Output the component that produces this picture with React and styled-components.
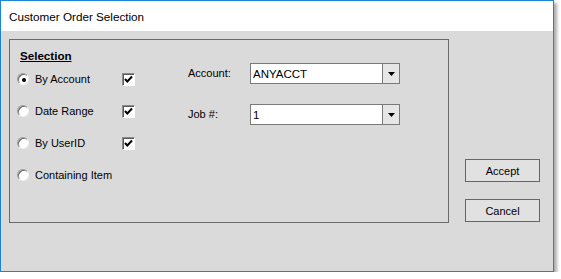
import React from "react";
import styled, { createGlobalStyle } from "styled-components";

const Global = createGlobalStyle`
  html, body { margin: 0; padding: 0; background: #ffffff; }
  body { font-family: "Liberation Sans", Arial, sans-serif; }
`;

const Window = styled.div`
  box-sizing: border-box;
  width: 554px;
  height: 272px;
  border: 1px solid #1a84d8;
  box-shadow: 3px 3px 3px rgba(0, 0, 0, 0.32);
  display: flex;
  flex-direction: column;
  background: #dadada;
`;

const TitleBar = styled.div`
  height: 30px;
  flex: none;
  background: #ffffff;
  display: flex;
  align-items: center;
  padding-left: 8px;
  padding-top: 1px;
  box-sizing: border-box;
  font-size: 11.7px;
  color: #000;
`;

const Body = styled.div`
  flex: 1;
  display: flex;
  gap: 16px;
  padding: 8px 0 0 8px;
  background: #dadada;
  font-size: 11px;
  color: #000;
`;

const GroupBox = styled.div`
  box-sizing: border-box;
  width: 440px;
  height: 184px;
  border: 1px solid #6a6a6a;
  display: flex;
  padding: 9px 0 0 7px;
`;

const LeftCol = styled.div`
  width: 171px;
  display: flex;
  flex-direction: column;
`;

const Heading = styled.div`
  height: 13px;
  line-height: 13px;
  padding-left: 3px;
  margin-bottom: 1px;
  font-size: 11.6px;
  font-weight: bold;
  text-decoration: underline;
`;

const OptionRow = styled.div`
  height: 32px;
  display: flex;
  align-items: center;
`;

const Radio = styled.span`
  box-sizing: border-box;
  width: 12px;
  height: 12px;
  border-radius: 50%;
  background: #fff;
  border: 1px solid;
  border-color: #9a9a9a #f4f4f4 #f4f4f4 #9a9a9a;
  box-shadow: inset 1px 1px 0 #6d6d6d;
  display: flex;
  align-items: center;
  justify-content: center;
  &::after {
    content: "";
    width: 4px;
    height: 4px;
    border-radius: 50%;
    background: ${(p) => (p.$checked ? "#000" : "transparent")};
    margin: 1px 0 0 1px;
  }
`;

const OptionLabel = styled.span`
  width: 87px;
  margin-left: 6px;
  white-space: nowrap;
  line-height: 13px;
`;

const CheckBox = styled.span`
  box-sizing: border-box;
  width: 13px;
  height: 13px;
  background: #fff;
  border: 1px solid;
  border-color: #8a8a8a #ffffff #ffffff #8a8a8a;
  box-shadow: inset 1px 1px 0 #5a5a5a;
  display: flex;
  align-items: center;
  justify-content: center;
`;

const RightCol = styled.div`
  display: flex;
  flex-direction: column;
  gap: 20px;
  padding-top: 14px;
`;

const FieldRow = styled.div`
  display: flex;
  align-items: center;
  height: 21px;
`;

const FieldLabel = styled.span`
  width: 62px;
  margin-top: -1px;
`;

const Combo = styled.div`
  box-sizing: border-box;
  width: 150px;
  height: 21px;
  border: 1px solid #7a7a7a;
  background: #fff;
  display: flex;
`;

const ComboText = styled.span`
  flex: 1;
  padding-left: 2px;
  display: flex;
  align-items: center;
  font-size: 11.5px;
`;

const ComboButton = styled.span`
  width: 16px;
  border-left: 1px solid #7a7a7a;
  background: #e6e6e6;
  display: flex;
  align-items: center;
  justify-content: center;
`;

const ButtonCol = styled.div`
  display: flex;
  flex-direction: column;
  gap: 17px;
  padding-top: 120px;
`;

const Button = styled.button`
  box-sizing: border-box;
  width: 75px;
  height: 23px;
  border: 1px solid #666;
  background: #e1e1e1;
  font-family: "Liberation Sans", Arial, sans-serif;
  font-size: 11px;
  color: #000;
  padding: 0;
  border-radius: 0;
`;

const Check = () => (
  <svg width="9" height="9" viewBox="0 0 9 9">
    <path d="M1 4 L3.3 6.5 L8 1.5" fill="none" stroke="#000" strokeWidth="2" />
  </svg>
);

const Arrow = () => (
  <svg width="7" height="4" viewBox="0 0 7 4">
    <path d="M0 0 H7 L3.5 4 Z" fill="#000" />
  </svg>
);

const options = [
  { label: "By Account", checked: true, box: true },
  { label: "Date Range", checked: false, box: true },
  { label: "By UserID", checked: false, box: true },
  { label: "Containing Item", checked: false, box: false },
];

const fields = [
  { label: "Account:", value: "ANYACCT" },
  { label: "Job #:", value: "1" },
];

export default function App() {
  return (
    <>
      <Global />
      <Window>
        <TitleBar>Customer Order Selection</TitleBar>
        <Body>
          <GroupBox>
            <LeftCol>
              <Heading>Selection</Heading>
              {options.map((o) => (
                <OptionRow key={o.label}>
                  <Radio $checked={o.checked} />
                  <OptionLabel>{o.label}</OptionLabel>
                  {o.box && (
                    <CheckBox>
                      <Check />
                    </CheckBox>
                  )}
                </OptionRow>
              ))}
            </LeftCol>
            <RightCol>
              {fields.map((f) => (
                <FieldRow key={f.label}>
                  <FieldLabel>{f.label}</FieldLabel>
                  <Combo>
                    <ComboText>{f.value}</ComboText>
                    <ComboButton>
                      <Arrow />
                    </ComboButton>
                  </Combo>
                </FieldRow>
              ))}
            </RightCol>
          </GroupBox>
          <ButtonCol>
            <Button>Accept</Button>
            <Button>Cancel</Button>
          </ButtonCol>
        </Body>
      </Window>
    </>
  );
}
